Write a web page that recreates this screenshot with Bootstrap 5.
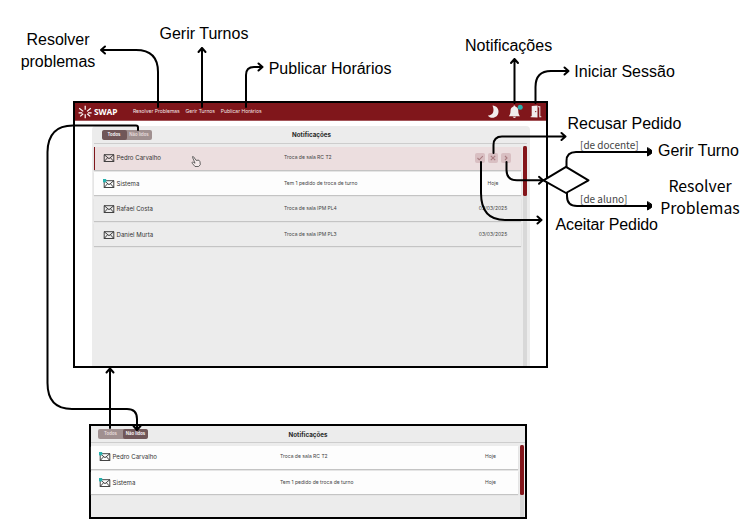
<!DOCTYPE html>
<html lang="pt">
<head>
<meta charset="utf-8">
<meta name="viewport" content="width=device-width, initial-scale=1">
<title>SWAP - Notificações</title>
<link href="https://cdn.jsdelivr.net/npm/bootstrap@5.3.0/dist/css/bootstrap.min.css" rel="stylesheet">
<style>
body{background:#fff;font-family:Inter,sans-serif;color:#333}
.board{width:750px;height:520px}
.screen{position:absolute;border:2px solid #000;background:#fff}
#main{left:73px;top:101px;width:475px;height:267px}
#unread{left:89px;top:424px;width:438px;height:95px;background:#ececec}
.topbar{height:18px;background:#80161b;border-bottom:1px solid #a4565a;padding:0 4px 0 3px;color:#f3e9e9}
.brand{font:700 8.4px/17px "Noto Sans",sans-serif;margin:0 15.5px 0 2px;color:#fff}
.menu{font-size:5px;line-height:17px;gap:5.8px}
.panel{margin:5px 16px 0 17px;background:#ececec;border-radius:4px 4px 0 0}
.head{height:18px;border-bottom:1px solid #cdcdcd;margin:0 3px 0 2px;padding-left:7.5px}
#unread .head{height:17px;margin:0;padding-left:7px}
.title-txt{font-size:6.2px;font-weight:700;color:#262626;letter-spacing:.05px;margin-left:140.5px;padding-top:1px}
.seg{width:50px;height:10px;border-radius:2px;background:#a09090;overflow:hidden;font-size:4.3px;font-weight:600;line-height:10px;color:#e8dede;text-align:center}
.seg .on{background:#705759;color:#fff;border-radius:2px}
.list-col{padding:2.5px 1px 0 2px}
#unread .list-col{padding-left:0}
.item{height:23px;margin-bottom:2.5px;padding-left:9px;box-shadow:0 1px 1px #c4c4c4}
.item.fresh{background:#fdfdfd}
.item.hot{background:#ecdedf;border-left:1px solid #80161b;padding-left:8px}
#unread .item{padding-left:8px}
.who{width:181px;font-size:6.1px;gap:1.5px}
.who svg{flex:none}
.what{font-size:5px;color:#444}
.when{width:55px;text-align:center;font-size:5px;color:#444}
#unread .when{width:54px}
.acts{gap:3px;width:45.5px}
.act{width:10px;height:10px;border-radius:2px;background:#d9bfc2}
.track{width:4px;margin:2px 3px 0 1.5px;background:#d8d8d8}
#unread .track{margin-right:1px}
.thumb{height:49.5px;border-radius:1.5px;background:#84161b}
.tag-txt{position:absolute;font:16px/22px "Liberation Sans",Arial,sans-serif;color:#000;white-space:nowrap;text-align:center}
.humanist{font-family:"Noto Sans CJK SC",sans-serif}
.guard{position:absolute;font:10px/12px "Noto Sans CJK SC",sans-serif;color:#444;white-space:nowrap}
.wires{position:absolute;left:0;top:0}
</style>
<script src="https://cdn.jsdelivr.net/npm/bootstrap@5.3.0/dist/js/bootstrap.bundle.min.js"></script>
</head>
<body class="m-0 overflow-hidden">
<svg width="0" height="0" class="position-absolute">
  <symbol id="mail" viewBox="0 0 12 10"><path d="M1.2 1.7h9.6v6.8H1.2zM1.2 1.7 6 5.7 10.8 1.7M1.2 8.5 4.6 4.7M10.8 8.5 7.4 4.7" fill="none" stroke="#222" stroke-width=".85"/></symbol>
  <symbol id="mail-new" viewBox="0 0 12 10"><use href="#mail"/><circle cx="1.5" cy="1.6" r="2" fill="#27b0ad"/></symbol>
</svg>
<main class="board position-relative overflow-hidden">
  <section class="screen d-flex flex-column" id="main">
    <nav class="topbar d-flex align-items-center">
      <svg width="14" height="14" viewBox="0 0 14 14" fill="none" stroke="#fff" stroke-width="1.2"><path d="M7.2 .8V4.8M7.2 9.2v4M1.2 3.2 5.2 6.4M12.8 3.2 9 6.4M.6 7.8H4.2M13.6 7.8H10M2.2 11.4l3-2.6M12.2 11.4l-3-2.6"/></svg>
      <span class="brand">SWAP</span>
      <div class="menu d-flex"><span>Resolver Problemas</span><span>Gerir Turnos</span><span>Publicar Horários</span></div>
      <div class="ms-auto d-flex align-items-center">
        <svg width="58" height="16" viewBox="484 103 58 16" fill="#f1eded">
          <path d="M492.5 104.500c4 .3 6 3 6 6.300 0 3.700-3 6-6 6-2 0-3.700-.8-4.600-2.400 5.200.2 6.900-4.500 4.600-9.900z"/>
          <path d="M514.300 104.600c.7 0 1 .5 1 1 2 .6 3 2.200 3 4.400 0 2.800.6 3.800 1.700 5.200H508.800c1.100-1.400 1.700-2.400 1.700-5.200 0-2.200 1-3.800 3-4.400 0-.5.200-1 .8-1zM512.800 115.800h3.200c-.2 1.500-3 1.500-3.200 0z"/><circle cx="520.200" cy="106.200" r="2.500" fill="#27b0ad"/>
          <path d="M531.700 105l5.800-.6v12.200l-5.800-.3h-1V115.300h1zM538 105.200h2.300v10h1v1h-2v-10H538z"/><circle cx="535.700" cy="110.600" r=".7" fill="#80161b"/>
        </svg>
      </div>
    </nav>
    <div class="panel d-flex flex-column flex-grow-1">
      <div class="head d-flex align-items-center">
        <div class="seg d-flex"><span class="on w-50">Todos</span><span class="w-50">Não lidos</span></div>
        <span class="title-txt">Notificações</span>
      </div>
      <div class="d-flex flex-grow-1">
        <div class="list-col flex-grow-1">
          <div class="item hot d-flex align-items-center"><div class="who d-flex align-items-center"><svg width="12" height="10"><use href="#mail"/></svg>Pedro Carvalho</div><span class="what">Troca de sala RC T2</span>
            <div class="acts d-flex ms-auto">
              <span class="act d-flex"><svg viewBox="0 0 10 10" fill="none" stroke="#a87c80" stroke-width="1.1"><path d="m2.500 5 1.700 1.800L7.800 3.200"/></svg></span>
              <span class="act d-flex"><svg viewBox="0 0 10 10" fill="none" stroke="#a87c80" stroke-width="1.1"><path d="m2.800 2.800 4.400 4.400m0-4.400L2.800 7.200"/></svg></span>
              <span class="act d-flex"><svg viewBox="0 0 10 10" fill="none" stroke="#a87c80" stroke-width="1.1"><path d="m4 3 2 2-2 2"/></svg></span>
            </div></div>
          <div class="item fresh d-flex align-items-center"><div class="who d-flex align-items-center"><svg width="12" height="10" overflow="visible"><use href="#mail-new"/></svg>Sistema</div><span class="what">Tem 1 pedido de troca de turno</span><span class="when ms-auto">Hoje</span></div>
          <div class="item d-flex align-items-center"><div class="who d-flex align-items-center"><svg width="12" height="10"><use href="#mail"/></svg>Rafael Costa</div><span class="what">Troca de sala IPM PL4</span><span class="when ms-auto">03/03/2025</span></div>
          <div class="item d-flex align-items-center"><div class="who d-flex align-items-center"><svg width="12" height="10"><use href="#mail"/></svg>Daniel Murta</div><span class="what">Troca de sala IPM PL3</span><span class="when ms-auto">03/03/2025</span></div>
        </div>
        <div class="track"><div class="thumb"></div></div>
      </div>
    </div>
  </section>

  <section class="screen d-flex flex-column" id="unread">
    <div class="head d-flex align-items-center">
      <div class="seg d-flex"><span class="w-50">Todos</span><span class="on w-50">Não lidos</span></div>
      <span class="title-txt">Notificações</span>
    </div>
    <div class="d-flex flex-grow-1">
      <div class="list-col flex-grow-1">
        <div class="item fresh d-flex align-items-center"><div class="who d-flex align-items-center"><svg width="12" height="10" overflow="visible"><use href="#mail-new"/></svg>Pedro Carvalho</div><span class="what">Troca de sala RC T2</span><span class="when ms-auto">Hoje</span></div>
        <div class="item fresh d-flex align-items-center"><div class="who d-flex align-items-center"><svg width="12" height="10" overflow="visible"><use href="#mail-new"/></svg>Sistema</div><span class="what">Tem 1 pedido de troca de turno</span><span class="when ms-auto">Hoje</span></div>
      </div>
      <div class="track"><div class="thumb"></div></div>
    </div>
  </section>

  <svg class="wires" width="750" height="520" fill="none" stroke="#000" stroke-width="2" stroke-linecap="round" stroke-linejoin="round">
    <path d="M158 107V72Q158 50 136 50H101M105 46.500 101 50l4 3.500"/>
    <path d="M202 107V48M198.500 52 202 48l3.500 4"/>
    <path d="M246 107V75Q246 67 254 67H262M258.500 63.500 262.500 67l-4 3.500"/>
    <path d="M514.500 103V59M511 63l3.500-4 3.500 4"/>
    <path d="M535.500 103V87Q535.500 71 551 71H568M564.500 67.500 568.500 71l-4 3.500"/>
    <path d="M493.500 153V145Q493.500 136.500 502 136.500H565M561.500 133 565.500 136.500l-4 3.500"/>
    <path d="M481 162V193Q481 220 505 220H541M537.500 216.500 541.500 220l-4 3.500"/>
    <path d="M506.500 162V170Q506.500 180.300 517 180.300H543"/>
    <path d="M543.500 180.300 566 166.800 588.500 180.300 566 193z" fill="#fff"/>
    <path d="M539 176.800 543 180.300l-4 3.500"/>
    <path d="M566.500 167V161Q566.500 152 576 152H649"/>
    <path d="M567 193V196Q567 206 577 206H649"/>
    <path d="M647.500 148v8l4-2.500v-3zM647.500 202v8l4-2.500v-3z" fill="#000" stroke-width="1"/>
    <path d="M138 130V127.500Q138 125.500 136 125.500H73Q48 125.500 47.500 152V383Q47.500 409 72 409H127Q137 409 137 419V429M133.500 426 137 430l3.500-4"/>
    <path d="M110 428V368.500M106.500 372.500 110 368.500l3.500 4"/>
    <g transform="translate(191 156)" stroke="#444" stroke-width=".8" fill="#f4eaea"><path d="M1.400 1.300C.8.500 2 .1 2.700.9L5 4.300 7.900 4.200 9 5.700 9.300 8.700 7.600 10.500H4L1.200 7.200C.6 6.100 1.700 5.700 2.500 6.300L3.700 7z"/></g>
  </svg>

  <div class="tag-txt" style="left:20px;top:29px;width:76px">Resolver<br>problemas</div>
  <div class="tag-txt" style="left:159.5px;top:23px">Gerir Turnos</div>
  <div class="tag-txt" style="left:268.7px;top:58px">Publicar Horários</div>
  <div class="tag-txt" style="left:465px;top:35px">Notificações</div>
  <div class="tag-txt" style="left:574.3px;top:61px">Iniciar Sessão</div>
  <div class="tag-txt" style="left:567.5px;top:113px">Recusar Pedido</div>
  <div class="tag-txt" style="left:658px;top:140px">Gerir Turno</div>
  <div class="tag-txt humanist" style="left:659px;top:175px;width:82px;font-size:15.8px">Resolver<br>Problemas</div>
  <div class="tag-txt" style="left:555.5px;top:214px;letter-spacing:-.12px">Aceitar Pedido</div>
  <div class="guard" style="left:580px;top:139px">[de docente]</div>
  <div class="guard" style="left:580px;top:193px">[de aluno]</div>
</main>
</body>
</html>
